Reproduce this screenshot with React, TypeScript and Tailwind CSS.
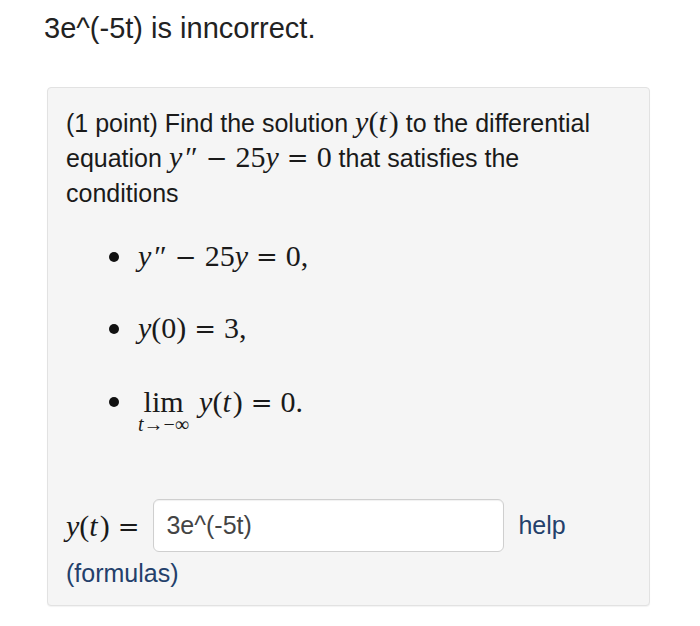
const serif = "font-['Liberation_Serif','Times_New_Roman',serif]";

function Y() {
  return <i className="italic">y</i>;
}

function Op({ children }: { children: React.ReactNode }) {
  return (
    <span className="mx-[8px] font-['DejaVu_Serif',serif] text-[26px]">{children}</span>
  );
}

function Yt() {
  return (
    <span>
      <Y />(<i className="italic pr-[2px]">t</i>)
    </span>
  );
}

function Ypp() {
  return (
    <span>
      <Y />
      <span className="ml-[3px]">″</span>
    </span>
  );
}

function Dot() {
  return <span className="mr-[19px] inline-block h-[10px] w-[10px] shrink-0 rounded-full bg-[#111]" />;
}

export default function App() {
  return (
    <div className="min-h-[626px] w-[700px] bg-white font-['Liberation_Sans',Arial,sans-serif] text-[#222]">
      <div className="pl-[44px] pt-[10px] text-[29px] leading-[36px]">3e^(-5t) is inncorrect.</div>

      <div className="ml-[47px] mt-[41px] w-[603px] rounded-[4px] border border-[#e2e2e2] bg-[#f5f5f5] px-[18px] pt-[18px] pb-[14px] shadow-[0_1px_1px_rgba(0,0,0,0.05)]">
        <p className="text-[25px] leading-[35px] text-[#1a1a1a]">
          (1 point) Find the solution{" "}
          <span className={`${serif} text-[30px] leading-none`}>
            <Yt />
          </span>{" "}
          to the differential equation{" "}
          <span className={`${serif} text-[30px] leading-none`}>
            <Ypp />
            <Op>−</Op>25<Y />
            <Op>=</Op>0
          </span>{" "}
          that satisfies the conditions
        </p>

        <ul className={`${serif} mt-[27px] pl-[43px] text-[30px] leading-[35px] text-[#1a1a1a]`}>
          <li className="flex items-center">
            <Dot />
            <span>
              <Ypp />
              <Op>−</Op>25<Y />
              <Op>=</Op>0,
            </span>
          </li>
          <li className="mt-[35px] flex items-center">
            <Dot />
            <span>
              <Y />
              (0)<Op>=</Op>3,
            </span>
          </li>
          <li className="mt-[37px] flex items-start">
            <span className="mt-[13px] flex">
              <Dot />
            </span>
            <span>
              <span className="inline-flex flex-col items-center align-baseline">
                <span className="leading-[35px]">lim</span>
                <span className="-mt-[5px] text-[20px] leading-[20px]">
                  <i className="italic">t</i>→−∞
                </span>
              </span>
              <span className="ml-[10px]">
                <Yt />
              </span>
              <Op>=</Op>0.
            </span>
          </li>
        </ul>

        <div className="mt-[65px] flex items-center">
          <span className={`${serif} text-[30px] text-[#1a1a1a]`}>
            <Yt />
            <span className="ml-[8px] font-['DejaVu_Serif',serif] text-[26px]">=</span>
          </span>
          <div className="ml-[14px] flex h-[53px] w-[351px] items-center rounded-[6px] border border-[#cfcfcf] bg-white pl-[12px] text-[25px] text-[#444] shadow-[inset_0_1px_1px_rgba(0,0,0,0.06)]">
            3e^(-5t)
          </div>
          <a className="ml-[14px] text-[25px] text-[#23406b]">help</a>
        </div>
        <div className="mt-[4px] text-[25px] leading-[35px] text-[#23406b]">(formulas)</div>
      </div>
    </div>
  );
}
